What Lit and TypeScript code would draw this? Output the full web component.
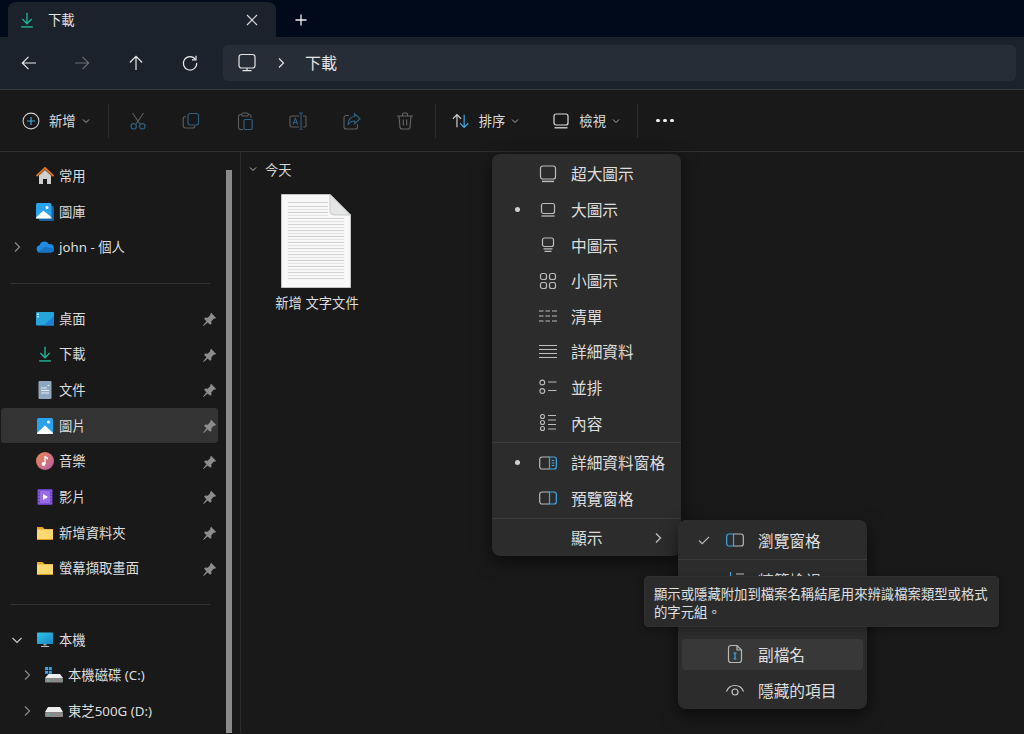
import { LitElement, html, css } from "lit";
import { customElement } from "lit/decorators.js";

const s = (size: number, body: any, vb = 20) =>
  html`<svg class="ic" width=${size} height=${size} viewBox="0 0 ${vb} ${vb}">${body}</svg>`;

const I: Record<string, (z?: number) => any> = {
  dl: (z = 20) => s(z, html`<svg viewBox="0 0 20 20"><path d="M10 2v12M4.8 9l5.2 5.2L15.200 9" fill="none" stroke="#1fb394" stroke-width="1.5"/><path d="M3.500 17.700h13" stroke="#1fb394" stroke-width="1.600"/></svg>`),
  close: (z = 14) => s(z, html`<svg viewBox="0 0 14 14"><path d="M2 2l10 10M12 2L2 12" stroke="#ddd" stroke-width="1.100" fill="none"/></svg>`, 14),
  plus: (z = 14) => s(z, html`<svg viewBox="0 0 14 14"><path d="M7 1.500v11M1.500 7h11" stroke="#eee" stroke-width="1.300"/></svg>`, 14),
  back: (z = 18) => s(z, html`<svg viewBox="0 0 18 18"><path d="M16 9H2.500M8.500 2.800L2.300 9l6.200 6.200" fill="none" stroke="currentColor" stroke-width="1.200"/></svg>`, 18),
  fwd: (z = 18) => s(z, html`<svg viewBox="0 0 18 18"><path d="M2 9h13.500M9.500 2.800L15.700 9l-6.200 6.200" fill="none" stroke="currentColor" stroke-width="1.200"/></svg>`, 18),
  up: (z = 18) => s(z, html`<svg viewBox="0 0 18 18"><path d="M9 16V2.500M2.800 8.500L9 2.300l6.200 6.200" fill="none" stroke="currentColor" stroke-width="1.200"/></svg>`, 18),
  refresh: (z = 18) => s(z, html`<svg viewBox="0 0 18 18"><path d="M14.500 5.500A6.700 6.700 0 1 0 15.700 9" fill="none" stroke="currentColor" stroke-width="1.200"/><path d="M15 1.800v4h-4" fill="none" stroke="currentColor" stroke-width="1.200"/></svg>`, 18),
  monitor: (z = 20) => s(z, html`<svg viewBox="0 0 20 20"><rect x="2" y="1.500" width="16" height="13.500" rx="2.500" fill="none" stroke="currentColor" stroke-width="1.200"/><path d="M10 15v2.500M5.500 17.700h9" stroke="currentColor" stroke-width="1.200"/></svg>`),
  chevR: (z = 12) => s(z, html`<svg viewBox="0 0 12 12"><path d="M4 1.500L8.500 6 4 10.500" fill="none" stroke="currentColor" stroke-width="1.200"/></svg>`, 12),
  chevD: (z = 10) => s(z, html`<svg viewBox="0 0 10 10"><path d="M2 3.500L5 6.500l3-3" fill="none" stroke="currentColor" stroke-width="1"/></svg>`, 10),
  add: (z = 18) => s(z, html`<svg viewBox="0 0 18 18"><circle cx="9" cy="9" r="7.900" fill="none" stroke="#ccc" stroke-width="1.100"/><path d="M9 5v8M5 9h8" stroke="#3fa9e8" stroke-width="1.200"/></svg>`, 18),
  cut: (z = 18) => s(z, html`<svg viewBox="0 0 18 18"><path d="M3.500 1l7.500 11M14.500 1L7 12" fill="none" stroke="#5e5e5e" stroke-width="1.100"/><circle cx="4.700" cy="14.300" r="2.700" fill="none" stroke="#2f5f80" stroke-width="1.200"/><circle cx="13.300" cy="14.300" r="2.700" fill="none" stroke="#2f5f80" stroke-width="1.200"/></svg>`, 18),
  copy: (z = 18) => s(z, html`<svg viewBox="0 0 18 18"><path d="M4 4.500h-.5A2.300 2.300 0 0 0 1.200 6.800v7A2.300 2.300 0 0 0 3.500 16h7a2.300 2.300 0 0 0 2.300-2.300" fill="none" stroke="#5e5e5e" stroke-width="1.100"/><rect x="6" y="1.500" width="10.500" height="11.500" rx="2" fill="none" stroke="#2f5f80" stroke-width="1.200"/></svg>`, 18),
  paste: (z = 18) => s(z, html`<svg viewBox="0 0 18 18"><path d="M6 2.500H4.500A2 2 0 0 0 2.500 4.500v11A2 2 0 0 0 4.500 17.500H7M12 2.500h1.500A2 2 0 0 1 15 4v2" fill="none" stroke="#5e5e5e" stroke-width="1.100"/><rect x="5.800" y="1" width="6.400" height="3" rx="1" fill="none" stroke="#5e5e5e" stroke-width="1.100"/><rect x="8" y="7.500" width="8.200" height="10" rx="1.500" fill="none" stroke="#2f5f80" stroke-width="1.200"/></svg>`, 18),
  rename: (z = 18) => s(z, html`<svg viewBox="0 0 18 18"><path d="M10 4H2.500A1.500 1.500 0 0 0 1 5.500v8A1.500 1.500 0 0 0 2.500 15H10M14 4h2a1 1 0 0 1 1 1.500v8a1.500 1.500 0 0 1-1 1.500h-2" fill="none" stroke="#5e5e5e" stroke-width="1.100"/><path d="M12 1v17M10.200 1h3.600M10.200 18h3.600M4 12.500l2.400-6 2.400 6M5 10.500h2.800" fill="none" stroke="#2f5f80" stroke-width="1.100"/></svg>`, 18),
  share: (z = 18) => s(z, html`<svg viewBox="0 0 18 18"><path d="M6 3.500H3A2 2 0 0 0 1 5.500v9.500A2 2 0 0 0 3 17h9.500a2 2 0 0 0 2-2v-3" fill="none" stroke="#5e5e5e" stroke-width="1.100"/><path d="M11.500 1.800L17 6.800l-5.500 5V9C8 9 6.300 10.500 5 13c0-5 2.500-8.500 6.500-8.500z" fill="none" stroke="#2f5f80" stroke-width="1.200"/></svg>`, 18),
  trash: (z = 18) => s(z, html`<svg viewBox="0 0 18 18"><path d="M1 4h16M6.500 4V2.500A1.500 1.500 0 0 1 8 1h2a1.500 1.500 0 0 1 1.500 1.500V4M3 4l1 11.500A2 2 0 0 0 6 17h6a2 2 0 0 0 2-1.500L15 4M7.300 7.500v6M10.700 7.500v6" fill="none" stroke="#666" stroke-width="1.100"/></svg>`, 18),
  sort: (z = 18) => s(z, html`<svg viewBox="0 0 20 20"><path d="M5.500 17V3M1 7.500L5.500 3 10 7.500" fill="none" stroke="#d0d0d0" stroke-width="1.300"/><path d="M13.500 3v14M9 12.500l4.500 4.500 4.500-4.500" fill="none" stroke="#3fa9e8" stroke-width="1.300"/></svg>`),
  viewT: (z = 18) => s(z, html`<svg viewBox="0 0 18 18"><rect x="2" y="2" width="14" height="11" rx="2" fill="none" stroke="currentColor" stroke-width="1.200"/><path d="M2.500 15.800h13" stroke="currentColor" stroke-width="1.300"/></svg>`, 18),
  xl: (z = 18) => s(z, html`<svg viewBox="0 0 18 18"><rect x="1.500" y="1" width="15" height="13" rx="2.300" fill="none" stroke="currentColor" stroke-width="1.200"/><path d="M3 16.400h12" stroke="currentColor" stroke-width="1.500"/></svg>`, 18),
  lg: (z = 18) => s(z, html`<svg viewBox="0 0 18 18"><rect x="2.500" y="2.500" width="13" height="10" rx="2" fill="none" stroke="currentColor" stroke-width="1.200"/><path d="M2.500 15h13" stroke="currentColor" stroke-width="1.300"/></svg>`, 18),
  md: (z = 18) => s(z, html`<svg viewBox="0 0 18 18"><rect x="3.500" y="2" width="11" height="8.500" rx="2" fill="none" stroke="currentColor" stroke-width="1.200"/><path d="M4.500 12.800h9M5.500 15.300h7" stroke="currentColor" stroke-width="1.200"/></svg>`, 18),
  sm: (z = 18) => s(z, html`<svg viewBox="0 0 18 18"><rect x="1.500" y="1.500" width="6" height="6" rx="2" fill="none" stroke="currentColor" stroke-width="1.200"/><rect x="10.500" y="1.500" width="6" height="6" rx="2" fill="none" stroke="currentColor" stroke-width="1.200"/><rect x="1.500" y="10.500" width="6" height="6" rx="2" fill="none" stroke="currentColor" stroke-width="1.200"/><rect x="10.500" y="10.500" width="6" height="6" rx="2" fill="none" stroke="currentColor" stroke-width="1.200"/></svg>`, 18),
  list: (z = 18) => s(z, html`<svg viewBox="0 0 18 18"><path d="M0 4h4.500M6.500 4h4.500M13 4h5M0 9h4.500M6.500 9h4.500M13 9h5M0 14h4.500M6.500 14h4.500M13 14h5" stroke="currentColor" stroke-width="1.100"/></svg>`, 18),
  details: (z = 18) => s(z, html`<svg viewBox="0 0 18 18"><path d="M0 2.500h18M0 6.500h18M0 10.500h18M0 14.500h18" stroke="currentColor" stroke-width="1.100"/></svg>`, 18),
  tiles: (z = 18) => s(z, html`<svg viewBox="0 0 18 18"><circle cx="3.300" cy="3.500" r="2.400" fill="none" stroke="currentColor" stroke-width="1.100"/><circle cx="3.300" cy="12" r="2.400" fill="none" stroke="currentColor" stroke-width="1.100"/><path d="M9 3h8.500M9 11.500h8.500" stroke="currentColor" stroke-width="1.100"/></svg>`, 18),
  content: (z = 18) => s(z, html`<svg viewBox="0 0 18 18"><circle cx="3.500" cy="2.500" r="2" fill="none" stroke="currentColor" stroke-width="1.100"/><circle cx="3.500" cy="8.500" r="2" fill="none" stroke="currentColor" stroke-width="1.100"/><circle cx="3.500" cy="14.500" r="2" fill="none" stroke="currentColor" stroke-width="1.100"/><path d="M9 1.500h8M9 6h8M9 10.500h8M9 15h8" stroke="currentColor" stroke-width="1.100"/></svg>`, 18),
  paneD: (z = 18) => s(z, html`<svg viewBox="0 0 18 18"><path d="M10.500 3H3A2.300 2.300 0 0 0 .7 5.300v7.400A2.300 2.300 0 0 0 3 15h7.500" fill="none" stroke="#b8b8b8" stroke-width="1.200"/><path d="M10.500 3H15a2.300 2.300 0 0 1 2.300 2.300v7.400A2.300 2.300 0 0 1 15 15h-4.500z" fill="none" stroke="#3fa9e8" stroke-width="1.200"/><path d="M12.700 6.500h2.600M12.700 9h2.600M12.700 11.500h2.600" stroke="#3fa9e8" stroke-width="1"/></svg>`, 18),
  paneP: (z = 18) => s(z, html`<svg viewBox="0 0 18 18"><path d="M10.500 3H3A2.300 2.300 0 0 0 .7 5.300v7.400A2.300 2.300 0 0 0 3 15h7.500" fill="none" stroke="#b8b8b8" stroke-width="1.200"/><path d="M10.500 3H15a2.300 2.300 0 0 1 2.300 2.300v7.400A2.300 2.300 0 0 1 15 15h-4.500z" fill="none" stroke="#3fa9e8" stroke-width="1.200"/></svg>`, 18),
  paneN: (z = 18) => s(z, html`<svg viewBox="0 0 18 18"><path d="M7.500 3H15a2.300 2.300 0 0 1 2.300 2.300v7.400A2.300 2.300 0 0 1 15 15H7.500" fill="none" stroke="#b8b8b8" stroke-width="1.200"/><path d="M7.500 3H3A2.300 2.300 0 0 0 .7 5.300v7.400A2.300 2.300 0 0 0 3 15h4.500z" fill="none" stroke="#3fa9e8" stroke-width="1.200"/></svg>`, 18),
  check: (z = 12) => s(z, html`<svg viewBox="0 0 12 12"><path d="M1 6.500l3.200 3.200L11 2.800" fill="none" stroke="#bdbdbd" stroke-width="1.100"/></svg>`, 12),
  compact: (z = 18) => s(z, html`<svg viewBox="0 0 18 18"><path d="M4.500 1v7M1.500 5.500l3 3 3-3M4.500 17v-5" fill="none" stroke="#3fa9e8" stroke-width="1.200"/><path d="M10 3h8M10 8h8M10 13h8" stroke="currentColor" stroke-width="1.100"/></svg>`, 18),
  ext: (z = 20) => s(z, html`<svg viewBox="0 0 20 20"><path d="M12 1.500H6A2.500 2.500 0 0 0 3.500 4v12A2.500 2.500 0 0 0 6 18.500h8a2.500 2.500 0 0 0 2.500-2.500V6z" fill="none" stroke="#b8b8b8" stroke-width="1.200"/><path d="M12 1.500V6h4.500" fill="none" stroke="#b8b8b8" stroke-width="1.200"/><path d="M10 9v6M8.500 9H11.500M8.500 15H11.500" fill="none" stroke="#3fa9e8" stroke-width="1.200"/></svg>`),
  eye: (z = 20) => s(z, html`<svg viewBox="0 0 20 20"><path d="M1.500 11.500C3 7.500 6.300 5.500 10 5.500s7 2 8.500 6" fill="none" stroke="#c4c4c4" stroke-width="1.200"/><circle cx="10" cy="12" r="3" fill="none" stroke="#c4c4c4" stroke-width="1.200"/></svg>`),
  pin: (z = 15) => s(z, html`<svg viewBox="0 0 14 14"><path d="M8.500.8l4.700 4.700-1.200.8-.8-.2-2.500 2.500.1 2.300-1.200 1.100-2.300-2.300L1.500 13 1 12.500l3.200-3.800L1.900 6.400 3 5.200l2.300.1 2.500-2.500-.2-.8z" fill="#8d8d8d"/></svg>`, 14),
  home: (z = 18) => s(z, html`<svg viewBox="0 0 18 18"><path d="M3 8.500L9 3l6 5.500V17h-4v-5H7v5H3z" fill="#cfcfcf"/><path d="M.5 9L9 1l8.500 8" fill="none" stroke="#e2761f" stroke-width="1.900"/></svg>`, 18),
  gallery: (z = 18) => s(z, html`<svg viewBox="0 0 18 18"><rect x="3" y="3" width="15" height="15" rx="1.500" fill="#1a5f9e"/><rect x="0" y="0" width="15.500" height="15.500" rx="1.500" fill="#29a3ec"/><path d="M0 14.500L7.500 7.500l8 7v1H0z" fill="#fff"/><circle cx="11" cy="4.500" r="1.500" fill="#fff"/></svg>`, 18),
  cloud: (z = 18) => s(z, html`<svg viewBox="0 0 18 18"><path d="M4 14.500a3.700 3.700 0 0 1-.4-7.300A5 5 0 0 1 12.700 6a4.300 4.300 0 0 1 1.800 8.500z" fill="#1e8ce0"/><path d="M2 14.500h13.500a2.500 2.500 0 0 0 2-4.200L9 9z" fill="#1673c4"/></svg>`, 18),
  desktop: (z = 18) => s(z, html`<svg viewBox="0 0 18 18"><rect x="0" y="2" width="18" height="13.500" rx="1" fill="#26a4dc"/><rect x="1.200" y="3.500" width="1.500" height="1.500" fill="#fff"/><rect x="1.200" y="6" width="1.500" height="1.500" fill="#dff"/><path d="M8 15.500L18 6v9.500z" fill="#1f7fd0"/></svg>`, 18),
  doc: (z = 18) => s(z, html`<svg viewBox="0 0 18 18"><rect x="2.500" y="0" width="13" height="18" rx="1" fill="#8fa7bf"/><path d="M5 7h6M5 9.500h8M5 12h8M11.500 4.500h2" stroke="#e6edf4" stroke-width="1"/></svg>`, 18),
  pics: (z = 18) => s(z, html`<svg viewBox="0 0 18 18"><rect x="1" y="1" width="16" height="16" rx="1.500" fill="#29a3ec"/><path d="M1 16l8-7.500L17 16v1H1z" fill="#fff"/><circle cx="12.500" cy="5" r="1.500" fill="#fff"/></svg>`, 18),
  music: (z = 18) => s(z, html`<svg viewBox="0 0 18 18"><defs><linearGradient id="mg" x1="0" y1="0" x2="1" y2="1"><stop offset="0" stop-color="#ec8a50"/><stop offset="1" stop-color="#b65ca8"/></linearGradient></defs><circle cx="9" cy="9" r="9" fill="url(#mg)"/><path d="M9 4v8" stroke="#fff" stroke-width="1.300"/><circle cx="7.600" cy="12" r="1.900" fill="#fff"/><path d="M9 4l3 1.500v2L9 6z" fill="#fff"/></svg>`, 18),
  video: (z = 18) => s(z, html`<svg viewBox="0 0 18 18"><rect x="1.500" y="1" width="15" height="16" rx="1" fill="#6b3fc4"/><rect x="4" y="2.500" width="10" height="13" fill="#9a6be8"/><path d="M7 6l5 3-5 3z" fill="#fff"/><path d="M2.500 3h.8M2.500 6h.8M2.500 9h.8M2.500 12h.8M2.500 15h.8M14.700 3h.8M14.700 6h.8M14.700 9h.8M14.700 12h.8M14.700 15h.8" stroke="#e0d4ff" stroke-width="1.200"/></svg>`, 18),
  folder: (z = 18) => s(z, html`<svg viewBox="0 0 18 18"><path d="M1 3h5.500l2 2H17v3H1z" fill="#e8a91d"/><path d="M1 5.500h16v9.500a1 1 0 0 1-1 1H2a1 1 0 0 1-1-1z" fill="#fcd873"/><path d="M1 15.500h16" stroke="#d79a1a" stroke-width="1"/></svg>`, 18),
  pc: (z = 18) => s(z, html`<svg viewBox="0 0 18 18"><defs><linearGradient id="pg" x1="0" y1="0" x2="1" y2="1"><stop offset="0" stop-color="#30c6e8"/><stop offset="1" stop-color="#1a86c8"/></linearGradient></defs><rect x="1" y="1.500" width="16" height="11.500" rx=".8" fill="url(#pg)"/><path d="M7.500 13h3v1.500h-3z" fill="#9aa"/><path d="M5 15h8v1H5z" fill="#bbb"/></svg>`, 18),
  driveC: (z = 18) => s(z, html`<svg viewBox="0 0 18 18"><path d="M3.500 8h11.500l3 4H0z" fill="#eee"/><rect x="0" y="12" width="18" height="4.500" rx="1" fill="#8a8a8a"/><circle cx="3" cy="14.300" r=".8" fill="#4dd"/><rect x="0" y="1" width="3" height="3" fill="#2fa5ee"/><rect x="3.800" y="1" width="3" height="3" fill="#2fa5ee"/><rect x="0" y="4.800" width="3" height="3" fill="#2fa5ee"/><rect x="3.800" y="4.800" width="3" height="3" fill="#2fa5ee"/></svg>`, 18),
  driveD: (z = 18) => s(z, html`<svg viewBox="0 0 18 18"><path d="M3 5h12l3 5H0z" fill="#eee"/><rect x="0" y="10" width="18" height="5" rx="1" fill="#8a8a8a"/><circle cx="3" cy="12.500" r=".8" fill="#4dd"/></svg>`, 18),
};

const lineYs = [8, 12, 15, 18, 21, 24, 27, 30, 33, 36, 39, 42, 45, 48, 51, 54, 57, 60, 63, 66, 69, 72, 75, 78, 81, 84];
const fileIcon = () => html`<svg class="ic" width="70" height="94" viewBox="0 0 70 94">
  <path d="M.5.5H49L69.500 21V93.500H.5z" fill="#f8f8f8" stroke="#c4c4c4"/>
  ${lineYs.map((y) => html`<svg><path d="M7 ${y}.5H${y < 22 ? 47 : 63}" stroke=${y % 2 ? "#e2e2e2" : "#d2d2d2"} stroke-width="1"/></svg>`)}
  <path d="M49 .5V17a4 4 0 0 0 4 4H69.500z" fill="#e4e6e6" stroke="#c9c9c9"/>
</svg>`;

type Side = { icon: string; label: string; pin?: boolean; chev?: "r" | "d"; depth?: number; sel?: boolean } | null;
const side: Side[] = [
  { icon: "home", label: "常用" },
  { icon: "gallery", label: "圖庫" },
  { icon: "cloud", label: "john - 個人", chev: "r" },
  null,
  { icon: "desktop", label: "桌面", pin: true },
  { icon: "dl", label: "下載", pin: true },
  { icon: "doc", label: "文件", pin: true },
  { icon: "pics", label: "圖片", pin: true, sel: true },
  { icon: "music", label: "音樂", pin: true },
  { icon: "video", label: "影片", pin: true },
  { icon: "folder", label: "新增資料夾", pin: true },
  { icon: "folder", label: "螢幕擷取畫面", pin: true },
  null,
  { icon: "pc", label: "本機", chev: "d" },
  { icon: "driveC", label: "本機磁碟 (C:)", chev: "r", depth: 1 },
  { icon: "driveD", label: "東芝500G (D:)", chev: "r", depth: 1 },
];

type Mi = { icon: string; label: string; mark?: "dot" | "check"; hover?: boolean; more?: boolean; lift?: boolean } | null;
const menu1: Mi[] = [
  { icon: "xl", label: "超大圖示" },
  { icon: "lg", label: "大圖示", mark: "dot" },
  { icon: "md", label: "中圖示" },
  { icon: "sm", label: "小圖示" },
  { icon: "list", label: "清單" },
  { icon: "details", label: "詳細資料" },
  { icon: "tiles", label: "並排" },
  { icon: "content", label: "內容" },
  null,
  { icon: "paneD", label: "詳細資料窗格", mark: "dot" },
  { icon: "paneP", label: "預覽窗格" },
  null,
  { icon: "", label: "顯示", more: true },
];
const menu2: Mi[] = [
  { icon: "paneN", label: "瀏覽窗格", mark: "check" },
  null,
  { icon: "compact", label: "精簡檢視", lift: true },
  { icon: "", label: "" },
  { icon: "ext", label: "副檔名", hover: true },
  { icon: "eye", label: "隱藏的項目" },
];

@customElement("app-root")
export class AppRoot extends LitElement {
  static styles = css`
    :host {
      display: block; position: relative; width: 1024px; height: 734px; overflow: hidden;
      background: #191919; color: #e6e6e6;
      font-family: "Noto Sans", "Noto Sans CJK TC", sans-serif; font-size: 13.330px;
    }
    .ic { display: block; flex: none; }
    .tabbar { height: 37px; background: #010a1b; display: flex; align-items: flex-end; padding-left: 8px; box-sizing: border-box; }
    .tab { width: 268px; height: 35px; background: #1c222c; border-radius: 8px 8px 0 0; display: flex; align-items: center; padding-left: 10px; box-sizing: border-box; }
    .tab .t { margin-left: 12px; flex: 1; }
    .tab .x { margin-right: 17px; }
    .newtab { margin-left: 18px; height: 35px; display: flex; align-items: center; }
    .nav { height: 53px; background: #1c222c; border-bottom: 1px solid #35383d; display: flex; align-items: center; box-sizing: border-box; padding: 0 8px 0 0; }
    .navbtn { width: 53.500px; display: flex; justify-content: center; margin-top: -1px; color: #e8e8e8; }
    .navbtn.first { margin-left: 2px; }
    .navbtn.dim { color: #6a6e74; }
    .navbtn.last { margin-left: 1px; }
    .addr { flex: 1; height: 36px; margin: -1px 0 0 6px; background: #272d37; border-radius: 5px; display: flex; align-items: center; padding-left: 14px; color: #e4e4e4; font-size: 16px; }
    .addr .sep { margin: 0 18px 0 18px; }
    .addr .cur { margin-top: -2px; }
    .toolbar { height: 62px; background: #191919; border-bottom: 1px solid #2f2f2f; display: flex; align-items: center; box-sizing: border-box; padding-left: 22px; }
    .tb { display: flex; align-items: center; justify-content: center; width: 53.500px; }
    .tbl { display: flex; align-items: center; color: #dcdcdc; }
    .tbl .lb { margin-left: 9px; }
    .tbl .cv { margin-left: 5px; color: #aaa; }
    .vsep { width: 1px; height: 34px; background: #2c2c2c; flex: none; }
    .sp1 { margin-left: 17px; }
    .sp2 { margin-left: 2.500px; }
    .sp3 { margin-left: 16px; }
    .first-tb { margin-left: 2.500px; }
    .sort { margin-left: 16px; }
    .view { margin-left: 32px; }
    .dots { display: flex; gap: 3.500px; margin-left: 18.500px; }
    .dots i { width: 3.500px; height: 3.500px; border-radius: 50%; background: #f0f0f0; display: block; }
    .main { height: 581px; display: flex; }
    .sidebar { width: 240px; border-right: 1px solid #2a2a2a; display: flex; flex: none; box-sizing: content-box; }
    .slist { width: 226px; padding-top: 6.200px; flex: none; }
    .scroll { width: 6px; margin-top: 18px; background: #8a8a8a; flex: none; }
    .row { height: 35.670px; display: flex; align-items: center; width: 218px; box-sizing: border-box; color: #dedede; }
    .row.sel { background: #333; margin-left: 1px; width: 217px; border-radius: 3px; }
    .row .ch { width: 36px; display: flex; justify-content: center; box-sizing: border-box; padding-right: 2px; color: #8a8a8a; flex: none; }
    .row.sel .ch { width: 35px; }
    .row.d1 .ch { width: 45px; padding-left: 8px; padding-right: 0; }
    .row .lbl { margin: -1px 0 0 5px; flex: 1; white-space: nowrap; }
    .row .pn { margin: 2px 1px 0 0; }
    .hr { height: 1px; background: #333; margin: 2px 0 0 10px; width: 200px; }
    .hrw { height: 35.670px; display: flex; align-items: center; }
    .content { flex: 1; padding: 6px 0 0 7px; }
    .group { display: flex; align-items: center; height: 22px; color: #d8d8d8; }
    .group .cv { margin-right: 7px; color: #bbb; }
    .file { width: 100px; margin: 14px 0 0 18px; display: flex; flex-direction: column; align-items: center; }
    .file .nm { margin: 5px 0 0 2px; color: #dedede; white-space: nowrap; }
    .menu { position: absolute; width: 189px; background: #2c2c2c; border-radius: 8px; box-sizing: border-box; box-shadow: 0 6px 18px rgba(0,0,0,.55); display: flex; flex-direction: column; }
    .m1 { left: 492px; top: 154px; height: 402px; padding-top: 2.200px; }
    .m2 { left: 678px; top: 520px; height: 189px; padding-top: 2px; }
    .mi { height: 31px; margin: 2.300px 4px; display: flex; align-items: center; border-radius: 4px; font-size: 15.700px; color: #dedede; flex: none; }
    .m2 .mi { margin: 2.500px 4px; }
    .m2 .mi.lift { margin: 0.500px 4px 4.500px; }
    .mi.hover { background: #383838; }
    .mk { width: 42px; display: flex; justify-content: center; flex: none; }
    .m2 .mk { width: 43px; }
    .dot { width: 5px; height: 5px; border-radius: 50%; background: #d0d0d0; display: block; }
    .ico { width: 20px; display: flex; justify-content: center; color: #bcbcbc; flex: none; }
    .mi .lb { margin-left: 13px; flex: 1; white-space: nowrap; }
    .mi .more { margin-right: 13px; color: #c8c8c8; }
    .mdiv { height: 1px; background: #3c3c3c; flex: none; }
    .m1 .mdiv { margin: 1.500px 0 1.500px; }
    .m2 .mdiv { margin: 1px 0 4px; }
    .tip { position: absolute; left: 644px; top: 576px; width: 355px; height: 51px; box-sizing: border-box; background: #2b2b2b; border: 1px solid #303030; border-radius: 4px; padding: 8px 9px; font-size: 13.350px; line-height: 18px; color: #e0e0e0; box-shadow: 0 2px 6px rgba(0,0,0,.3); }
  `;

  private miTpl(m: Mi) {
    if (!m) return html`<div class="mdiv"></div>`;
    return html`<div class="mi ${m.hover ? "hover" : ""} ${m.lift ? "lift" : ""}">
      <span class="mk">${m.mark === "dot" ? html`<i class="dot"></i>` : m.mark === "check" ? I.check() : ""}</span>
      <span class="ico">${m.icon ? I[m.icon]() : ""}</span>
      <span class="lb">${m.label}</span>
      ${m.more ? html`<span class="more">${I.chevR()}</span>` : ""}
    </div>`;
  }

  render() {
    return html`
      <div class="tabbar">
        <div class="tab">${I.dl(18)}<span class="t">下載</span><span class="x">${I.close()}</span></div>
        <div class="newtab">${I.plus()}</div>
      </div>
      <div class="nav">
        <span class="navbtn first">${I.back()}</span>
        <span class="navbtn dim">${I.fwd()}</span>
        <span class="navbtn">${I.up()}</span>
        <span class="navbtn last">${I.refresh()}</span>
        <div class="addr">${I.monitor()}<span class="sep">${I.chevR()}</span><span class="cur">下載</span></div>
      </div>
      <div class="toolbar">
        <div class="tbl">${I.add()}<span class="lb">新增</span><span class="cv">${I.chevD()}</span></div>
        <div class="vsep sp1"></div>
        <div class="tb first-tb">${I.cut()}</div>
        <div class="tb">${I.copy()}</div>
        <div class="tb">${I.paste()}</div>
        <div class="tb">${I.rename()}</div>
        <div class="tb">${I.share()}</div>
        <div class="tb">${I.trash()}</div>
        <div class="vsep sp2"></div>
        <div class="tbl sort">${I.sort()}<span class="lb">排序</span><span class="cv">${I.chevD()}</span></div>
        <div class="tbl view">${I.viewT()}<span class="lb">檢視</span><span class="cv">${I.chevD()}</span></div>
        <div class="vsep sp3"></div>
        <div class="dots"><i></i><i></i><i></i></div>
      </div>
      <div class="main">
        <div class="sidebar">
          <div class="slist">
            ${side.map((r) =>
              r
                ? html`<div class="row ${r.sel ? "sel" : ""} ${r.depth ? "d1" : ""}">
                    <span class="ch">${r.chev === "r" ? I.chevR() : r.chev === "d" ? s(12, html`<svg viewBox="0 0 12 12"><path d="M1.500 4L6 8.500 10.500 4" fill="none" stroke="#c8c8c8" stroke-width="1.200"/></svg>`, 12) : ""}</span>
                    ${I[r.icon](18)}
                    <span class="lbl">${r.label}</span>
                    ${r.pin ? html`<span class="pn">${I.pin()}</span>` : ""}
                  </div>`
                : html`<div class="hrw"><div class="hr"></div></div>`
            )}
          </div>
          <div class="scroll"></div>
        </div>
        <div class="content">
          <div class="group"><span class="cv">${I.chevD()}</span>今天</div>
          <div class="file">${fileIcon()}<span class="nm">新增 文字文件</span></div>
        </div>
      </div>
      <div class="menu m1">${menu1.map((m) => this.miTpl(m))}</div>
      <div class="menu m2">${menu2.map((m) => this.miTpl(m))}</div>
      <div class="tip">顯示或隱藏附加到檔案名稱結尾用來辨識檔案類型或格式的字元組。</div>
    `;
  }
}
